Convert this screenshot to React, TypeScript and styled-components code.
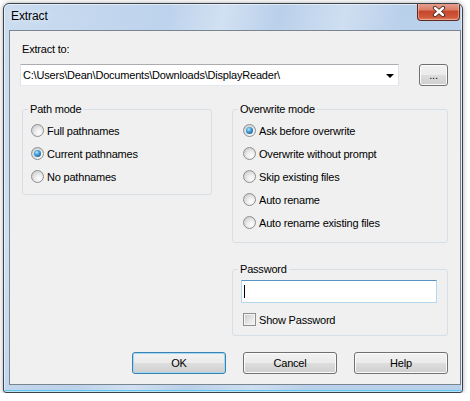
import React from 'react';
import styled, { createGlobalStyle } from 'styled-components';

const GlobalStyle = createGlobalStyle`
	html, body {
		margin: 0;
		padding: 0;
		background: #fff;
	}
	body {
		font-family: 'Liberation Sans', Arial, sans-serif;
		font-size: 11px;
		color: #000;
	}
`;

const Window = styled.div`
	box-sizing: border-box;
	width: 460px;
	height: 390px;
	margin: 3px 0 0 3px;
	display: flex;
	flex-direction: column;
	border: 1px solid #3b4249;
	border-radius: 6px 6px 3px 3px;
	background: linear-gradient(
			104deg,
			rgba(255, 255, 255, 0.25) 0%,
			rgba(255, 255, 255, 0.05) 30%,
			rgba(255, 255, 255, 0.35) 40%,
			rgba(255, 255, 255, 0) 50%,
			rgba(255, 255, 255, 0.3) 62%,
			rgba(255, 255, 255, 0) 72%
		),
		linear-gradient(#b9d0eb, #c3d8ef 60%, #b8d0ea);
	box-shadow: inset 0 0 0 1px rgba(255, 255, 255, 0.55), inset 0 -2px 0 #63c4ec, 0 0 5px rgba(0, 0, 0, 0.35);
	overflow: hidden;
`;

const TitleBar = styled.div`
	height: 26px;
	flex: none;
	display: flex;
	justify-content: space-between;
	align-items: flex-start;
	padding: 0 2px 0 7px;
`;

const Title = styled.span`
	margin-top: 5px;
	font-size: 12px;
	line-height: 15px;
	letter-spacing: -0.1px;
	color: #000;
	text-shadow: 0 0 6px rgba(255, 255, 255, 0.9);
`;

const CloseButton = styled.div`
	box-sizing: border-box;
	width: 43px;
	height: 19px;
	margin-top: -2px;
	display: flex;
	align-items: center;
	justify-content: center;
	border: 1px solid #5e2a20;
	border-top: none;
	border-radius: 0 0 4px 4px;
	background: linear-gradient(#e9a99b 0%, #dc7d67 45%, #c7452a 50%, #cf5a3b 85%, #e0866a 100%);
	box-shadow: inset 0 0 0 1px rgba(255, 210, 200, 0.45);
`;

const Client = styled.div`
	box-sizing: border-box;
	height: 355px;
	margin: 0 1px 0 5px;
	border: 1px solid #7b858f;
	background: #f0f0f0;
	padding: 12px 12px 0 12px;
	display: flex;
	flex-direction: column;
`;

const Label = styled.div`
	line-height: 13px;
	letter-spacing: -0.2px;
`;

const PathRow = styled.div`
	display: flex;
	align-items: center;
	margin: 8px 0 0 -2px;
	height: 22px;
`;

const Combo = styled.div`
	box-sizing: border-box;
	width: 379px;
	height: 22px;
	display: flex;
	align-items: center;
	justify-content: space-between;
	padding: 0 4px 0 2px;
	background: #fff;
	border: 1px solid #e2e3ea;
	border-top-color: #abadb3;
	border-bottom-color: #e3e9ef;
	letter-spacing: -0.2px;
	white-space: nowrap;
`;

const Arrow = styled.span`
	width: 0;
	height: 0;
	border-left: 4px solid transparent;
	border-right: 4px solid transparent;
	border-top: 4px solid #000;
	margin-top: 1px;
`;

const Button = styled.div<{ $width: number; $default?: boolean }>`
	box-sizing: border-box;
	width: ${p => p.$width}px;
	height: 22px;
	display: flex;
	align-items: center;
	justify-content: center;
	line-height: 13px;
	letter-spacing: -0.2px;
	border: 1px solid ${p => (p.$default ? '#3c7fb1' : '#707070')};
	border-radius: 3px;
	background: linear-gradient(#f2f2f2 0%, #ebebeb 48%, #dddddd 52%, #cfcfcf 100%);
	box-shadow: inset 0 0 0 1px ${p => (p.$default ? '#9fd9f4' : '#fbfbfb')};
`;

const Columns = styled.div`
	display: grid;
	grid-template-columns: 190px 216px;
	column-gap: 20px;
	align-items: start;
	margin-top: 17px;
`;

const Stack = styled.div`
	display: flex;
	flex-direction: column;
	gap: 20px;
`;

const Group = styled.fieldset<{ $height: number }>`
	box-sizing: border-box;
	height: ${p => p.$height}px;
	margin: 0;
	min-width: 0;
	padding: 3px 8px 0 8px;
	border: 1px solid #d5dfe5;
	border-radius: 3px;
`;

const Legend = styled.legend`
	padding: 0 2px;
	margin-left: -3px;
	line-height: 13px;
	letter-spacing: -0.2px;
`;

const OptionList = styled.div<{ $indent: number }>`
	display: flex;
	flex-direction: column;
	margin-left: ${p => p.$indent}px;
`;

const Option = styled.div`
	height: 23px;
	display: flex;
	align-items: center;
	gap: 3px;
	letter-spacing: -0.2px;
	white-space: nowrap;
`;

const Radio = styled.span<{ $checked?: boolean }>`
	box-sizing: border-box;
	width: 13px;
	height: 13px;
	flex: none;
	display: flex;
	align-items: center;
	justify-content: center;
	border-radius: 50%;
	border: 1px solid #8d8f91;
	background: radial-gradient(circle at 65% 70%, #fdfdfd 0%, #eeeeee 35%, #cfcfcf 80%);
	&::after {
		content: '';
		display: ${p => (p.$checked ? 'block' : 'none')};
		width: 7px;
		height: 7px;
		border-radius: 50%;
		background: radial-gradient(circle at 40% 35%, #b7ecff 0%, #4aa6dc 35%, #1d5d99 80%, #163f6c 100%);
	}
`;

const PasswordInput = styled.div`
	box-sizing: border-box;
	width: 196px;
	height: 23px;
	margin-top: 1px;
	display: flex;
	align-items: center;
	padding-left: 2px;
	background: #fff;
	border: 1px solid #b7d7ec;
	border-top-color: #5b94c0;
`;

const Caret = styled.span`
	width: 1px;
	height: 13px;
	background: #000;
`;

const CheckRow = styled.div`
	height: 13px;
	margin: 10px 0 0 2px;
	display: flex;
	align-items: center;
	gap: 3px;
	letter-spacing: -0.2px;
`;

const Checkbox = styled.span`
	box-sizing: border-box;
	width: 13px;
	height: 13px;
	border: 1px solid #8e8f8f;
	background: linear-gradient(135deg, #c9c9c9 0%, #e6e6e6 55%, #f8f8f8 100%);
	box-shadow: inset 0 0 0 1px #f4f4f4;
`;

const ButtonRow = styled.div`
	display: flex;
	justify-content: flex-end;
	gap: 17px;
	margin-top: 16px;
`;

const CloseGlyph = () => (
	<svg width="14" height="11" viewBox="0 0 14 11">
		<path d="M3 2 L11 9 M11 2 L3 9" stroke="#4a2a26" strokeWidth="4.2" strokeLinecap="round" fill="none" />
		<path d="M3 2 L11 9 M11 2 L3 9" stroke="#fff" strokeWidth="2.4" strokeLinecap="round" fill="none" />
	</svg>
);

const pathModes = ['Full pathnames', 'Current pathnames', 'No pathnames'];
const overwriteModes = [
	'Ask before overwrite',
	'Overwrite without prompt',
	'Skip existing files',
	'Auto rename',
	'Auto rename existing files'
];

const App = () => {
	const pathMode = 1;
	const overwriteMode = 0;

	return (
		<>
			<GlobalStyle />
			<Window>
				<TitleBar>
					<Title>Extract</Title>
					<CloseButton>
						<CloseGlyph />
					</CloseButton>
				</TitleBar>
				<Client>
					<Label>Extract to:</Label>
					<PathRow>
						<Combo>
							<span>C:\Users\Dean\Documents\Downloads\DisplayReader\</span>
							<Arrow />
						</Combo>
						<Button $width={29} style={{ marginLeft: 'auto' }}>
							...
						</Button>
					</PathRow>
					<Columns>
						<Group $height={92}>
							<Legend>Path mode</Legend>
							<OptionList $indent={0}>
								{pathModes.map((m, i) => (
									<Option key={m}>
										<Radio $checked={i === pathMode} />
										{m}
									</Option>
								))}
							</OptionList>
						</Group>
						<Stack>
							<Group $height={140}>
								<Legend>Overwrite mode</Legend>
								<OptionList $indent={2}>
									{overwriteModes.map((m, i) => (
										<Option key={m}>
											<Radio $checked={i === overwriteMode} />
											{m}
										</Option>
									))}
								</OptionList>
							</Group>
							<Group $height={73}>
								<Legend>Password</Legend>
								<PasswordInput>
									<Caret />
								</PasswordInput>
								<CheckRow>
									<Checkbox />
									Show Password
								</CheckRow>
							</Group>
						</Stack>
					</Columns>
					<ButtonRow>
						<Button $width={94} $default>
							OK
						</Button>
						<Button $width={94}>Cancel</Button>
						<Button $width={94}>Help</Button>
					</ButtonRow>
				</Client>
			</Window>
		</>
	);
};

export default App;
